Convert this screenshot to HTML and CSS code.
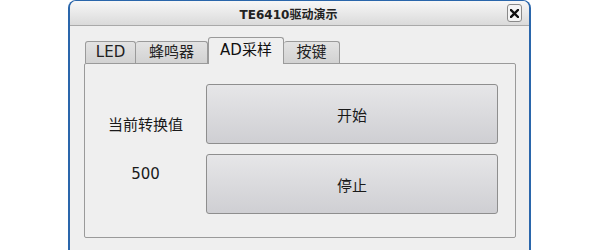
FILE: index.html
```html
<!DOCTYPE html>
<html lang="zh-CN">
<head>
    <meta charset="UTF-8">
    <title>TE6410驱动演示</title>
    <link rel="stylesheet" href="styles.css">
</head>
<body>
    <div class="window">
        <div class="titlebar">
            <span class="title">TE6410驱动演示</span>
            <span class="close">
                <svg width="9" height="9" viewBox="0 0 9 9">
                    <path d="M1 1 L8 8 M8 1 L1 8" stroke="#111" stroke-width="2.4" stroke-linecap="square"/>
                </svg>
            </span>
        </div>

        <div class="content">
            <div class="tabs">
                <div class="tab">LED</div>
                <div class="tab">蜂鸣器</div>
                <div class="tab active">AD采样</div>
                <div class="tab">按键</div>
            </div>

            <div class="pane">
                <div class="labels">
                    <div class="label">当前转换值</div>
                    <div class="label value">500</div>
                </div>
                <div class="buttons">
                    <button class="btn">开始</button>
                    <button class="btn">停止</button>
                </div>
            </div>
        </div>
    </div>
</body>
</html>
```

FILE: styles.css
```css
* {
    margin: 0;
    padding: 0;
    box-sizing: border-box;
}

body {
    background: white;
    font-family: "DejaVu Sans", "Noto Sans CJK SC", sans-serif;
    color: #1a1a1a;
}

.window {
    margin-left: 68px;
    width: 463px;
    height: 250px;
    border: 2px solid #2a66ab;
    border-top-width: 1px;
    border-bottom: none;
    border-radius: 8px 8px 0 0;
    background: #efefef;
    overflow: hidden;
}

.titlebar {
    display: flex;
    align-items: center;
    height: 25px;
    padding-right: 7px;
    background: linear-gradient(#f7f7f7 0%, #e6e6e6 60%, #dadada 100%);
    border-bottom: 1px solid #a9a9a9;
}

.title {
    flex: 1;
    text-align: center;
    font-size: 12px;
    font-weight: bold;
    color: #222;
}

.close {
    display: flex;
    align-items: center;
    justify-content: center;
    width: 15px;
    height: 18px;
    border: 1px solid #8a8a8a;
    border-radius: 3px;
    background: #f4f4f4;
}

.content {
    padding: 11px 13px 0 14px;
}

.tabs {
    display: flex;
    align-items: flex-end;
    height: 26px;
    padding-left: 1px;
    position: relative;
    z-index: 1;
}

.tab {
    height: 22px;
    border: 1px solid #9a9a9a;
    border-bottom: none;
    border-radius: 3px 3px 0 0;
    background: linear-gradient(#e3e3e3, #d2d2d2);
    font-size: 15px;
    line-height: 21px;
    text-align: center;
    color: #222;
}

.tab:nth-child(1) { width: 51px; }
.tab:nth-child(2) { width: 72px; border-left: none; }
.tab:nth-child(3) { width: 76px; }
.tab:nth-child(4) { width: 56px; border-left: none; }

.tab.active {
    height: 27px;
    margin-bottom: -1px;
    background: #efefef;
    line-height: 24px;
    color: #111;
}

.pane {
    display: flex;
    height: 175px;
    border: 1px solid #9a9a9a;
    border-radius: 2px;
    padding: 20px 17px 0 0;
}

.labels {
    width: 121px;
    padding-top: 31px;
    text-align: center;
}

.label {
    font-size: 15px;
    line-height: 20px;
}

.label.value {
    margin-top: 29px;
}

.buttons {
    display: flex;
    flex-direction: column;
    gap: 10px;
    flex: 1;
}

.btn {
    height: 60px;
    border: 1px solid #8e8e8e;
    border-radius: 3px;
    background: linear-gradient(#e6e6e8, #cfcfd3);
    font-family: inherit;
    font-size: 15px;
    color: #1a1a1a;
}
```
